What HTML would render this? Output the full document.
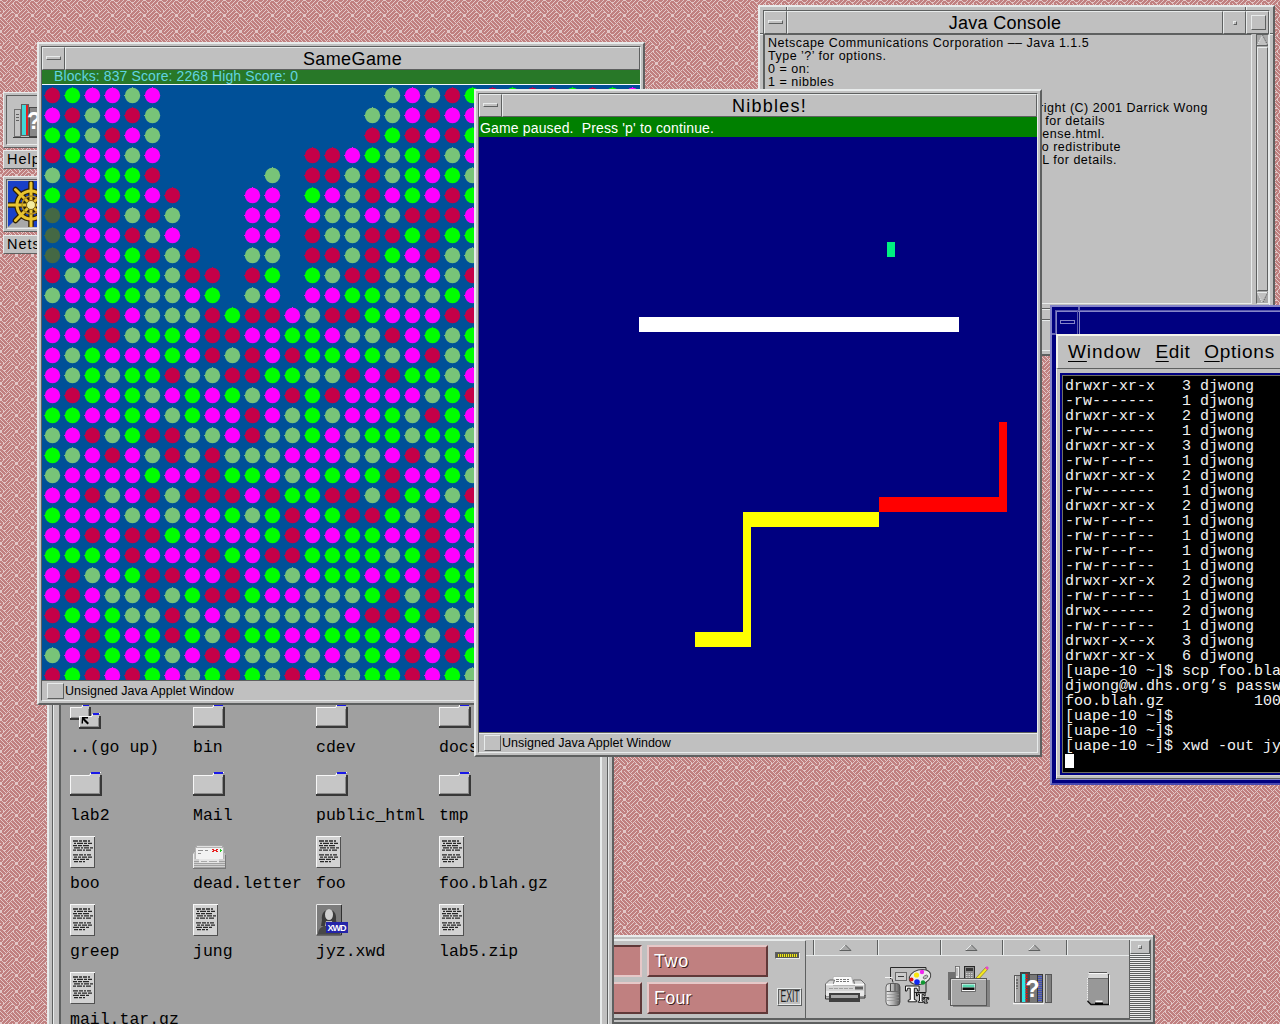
<!DOCTYPE html><html><head><meta charset="utf-8"><title>desktop</title><style>
*{margin:0;padding:0;box-sizing:border-box}
html,body{width:1280px;height:1024px;overflow:hidden}
body{position:relative;font-family:"Liberation Sans",sans-serif;background:#c08080;color:#000}
.a{position:absolute}
.win{position:absolute;background:#c0c0c0;border:2px solid;border-color:#e8ebeb #5e6060 #5e6060 #e8ebeb;padding:2px}
.win.f6{padding:3px}
.win>.in{position:relative;width:100%;height:100%;border:1px solid;border-color:#5e6060 #e8ebeb #e8ebeb #5e6060;background:#c0c0c0}
.win.act{background:#000080;border-color:#8585c8 #4848b0 #4848b0 #8585c8}
.win.act>.in{border-color:#000080 #8585c8 #8585c8 #000080;background:#000080}
.nt{position:absolute;background:#5e6060}.nt i{position:absolute;background:#e8ebeb}
.tb{position:absolute;left:0;top:0;right:0;height:23px;background:#c0c0c0}
.tb .mb{position:absolute;left:0;top:0;width:23px;height:23px;border:1px solid;border-color:#e8ebeb #5e6060 #5e6060 #e8ebeb}
.tb .mb i{position:absolute;left:3px;top:8px;width:15px;height:4px;border:1px solid;border-color:#e8ebeb #5e6060 #5e6060 #e8ebeb}
.tb .tt{position:absolute;left:23px;top:0;right:0;height:23px;border:1px solid;border-color:#e8ebeb #5e6060 #5e6060 #e8ebeb;text-align:center;font-size:18px;line-height:22px;white-space:nowrap;overflow:hidden;letter-spacing:.4px}
.bv{border:1px solid;border-color:#e8ebeb #5e6060 #5e6060 #e8ebeb}
.bvi{border:1px solid;border-color:#5e6060 #e8ebeb #e8ebeb #5e6060}
.sb{position:absolute;left:0;right:0;bottom:0;height:20px;background:#c0c0c0;border-top:1px solid #5e6060;font-size:12.5px;line-height:20px;white-space:nowrap}
.sb b{position:absolute;left:5px;top:2px;width:17px;height:16px;border:1px solid;border-color:#e8ebeb #5e6060 #5e6060 #e8ebeb}
.sb span{position:absolute;left:23px;top:0;letter-spacing:0}
.lbl{position:absolute;font-family:"Liberation Mono",monospace;font-size:16.5px;line-height:20px;white-space:pre}
.term{position:absolute;font-family:"Liberation Mono",monospace;font-size:15px;line-height:15px;white-space:pre;color:#f2f2f2}
.jc{position:absolute;font-size:12.5px;line-height:13px;white-space:pre;letter-spacing:.5px}
</style></head><body><svg class="a" style="left:0;top:0" width="1280" height="1024" shape-rendering="crispEdges"><defs><pattern id="bgp" width="16" height="16" patternUnits="userSpaceOnUse"><rect width="16" height="16" fill="#c08080"/><path d="M0 0h1v1h-1zM1 0h1v1h-1zM7 0h1v1h-1zM11 0h1v1h-1zM15 0h1v1h-1zM2 1h1v1h-1zM6 1h1v1h-1zM10 1h1v1h-1zM14 1h1v1h-1zM3 2h1v1h-1zM4 2h1v1h-1zM5 2h1v1h-1zM9 2h1v1h-1zM13 2h1v1h-1zM0 3h1v1h-1zM4 3h1v1h-1zM8 3h1v1h-1zM12 3h1v1h-1zM13 3h1v1h-1zM1 4h1v1h-1zM5 4h1v1h-1zM7 4h1v1h-1zM11 4h1v1h-1zM13 4h1v1h-1zM2 5h1v1h-1zM6 5h1v1h-1zM10 5h1v1h-1zM14 5h1v1h-1zM3 6h1v1h-1zM7 6h1v1h-1zM9 6h1v1h-1zM11 6h1v1h-1zM15 6h1v1h-1zM0 7h1v1h-1zM4 7h1v1h-1zM8 7h1v1h-1zM12 7h1v1h-1zM1 8h1v1h-1zM5 8h1v1h-1zM7 8h1v1h-1zM9 8h1v1h-1zM13 8h1v1h-1zM2 9h1v1h-1zM6 9h1v1h-1zM10 9h1v1h-1zM14 9h1v1h-1zM3 10h1v1h-1zM5 10h1v1h-1zM9 10h1v1h-1zM11 10h1v1h-1zM15 10h1v1h-1zM0 11h1v1h-1zM3 11h1v1h-1zM4 11h1v1h-1zM8 11h1v1h-1zM12 11h1v1h-1zM3 12h1v1h-1zM7 12h1v1h-1zM11 12h1v1h-1zM12 12h1v1h-1zM13 12h1v1h-1zM2 13h1v1h-1zM6 13h1v1h-1zM10 13h1v1h-1zM14 13h1v1h-1zM0 14h1v1h-1zM1 14h1v1h-1zM5 14h1v1h-1zM9 14h1v1h-1zM15 14h1v1h-1zM0 15h1v1h-1zM1 15h1v1h-1zM4 15h1v1h-1zM8 15h1v1h-1zM12 15h1v1h-1zM15 15h1v1h-1z" fill="#e3c7c7"/></pattern></defs><rect width="1280" height="1024" fill="url(#bgp)"/></svg><div class="a bv" style="left:3px;top:92px;width:60px;height:56px;background:#c0c0c0"><div class="a bvi" style="left:2px;top:2px;width:54px;height:50px"></div><svg class="a" style="left:9px;top:9px" width="40" height="38" shape-rendering="crispEdges"><rect x="1" y="7" width="6" height="27" fill="#c4c4c4" stroke="#707070"/><path d="M3 12h3M3 15h3M3 18h3" stroke="#606060"/><rect x="8" y="2" width="8" height="32" fill="#606060"/><rect x="9" y="3" width="4" height="30" fill="#40d8d8"/><rect x="13" y="3" width="2" height="30" fill="#e02020"/><rect x="16" y="5" width="11" height="29" fill="#888888" stroke="#484848"/><path d="M0 35h28" stroke="#404040"/><text x="14" y="27" font-family="Liberation Sans" font-weight="bold" font-size="23" fill="#fff">?</text></svg></div><div class="a bv" style="left:3px;top:150px;width:60px;height:19px;background:#c0c0c0;font-size:14.5px;line-height:16px;padding-left:3px;letter-spacing:1px;white-space:nowrap;overflow:hidden">Help</div><div class="a bv" style="left:3px;top:176px;width:60px;height:56px;background:#c0c0c0"><div class="a bvi" style="left:2px;top:2px;width:54px;height:50px"></div><svg class="a" style="left:4px;top:4px" width="50" height="46"><rect width="50" height="46" fill="#1840c8"/><path d="M0 46l8-8h14l4 8z" fill="#a8a8a8"/><g stroke="#302000" stroke-width="5.5" fill="none" stroke-linecap="round"><circle cx="23" cy="24" r="14"/><path d="M23 2v44M1 24h44M7.5 8.5l31 31M38.5 8.5l-31 31"/></g><g stroke="#e8c430" stroke-width="3" fill="none" stroke-linecap="round"><circle cx="23" cy="24" r="14"/><path d="M23 2v44M1 24h44M7.5 8.5l31 31M38.5 8.5l-31 31"/></g><circle cx="23" cy="24" r="9" fill="none" stroke="#b89020" stroke-width="1.5"/><circle cx="23" cy="24" r="4.5" fill="#f4eca0" stroke="#806010"/></svg></div><div class="a bv" style="left:3px;top:235px;width:60px;height:19px;background:#c0c0c0;font-size:14.5px;line-height:16px;padding-left:3px;letter-spacing:1px;white-space:nowrap;overflow:hidden">Nets</div><div class="win  f6" style="left:47px;top:600px;width:567px;height:470px"><div class="in"><div class="a bv" style="left:0;top:0;width:555px;height:460px;background:#c0c0c0"></div><div class="a" style="left:6px;top:0;width:543px;height:460px;background:#a0a0a0;border-left:2px solid #5e6060;border-right:2px solid #e8ebeb"></div><svg class="a" style="left:17px;top:98px" width="34" height="27" shape-rendering="crispEdges"><path d="M0 3h11l2-3h6v3h1v12h-20z" fill="#c6c6c6"/><path d="M0.5 15v-11.5h11l2-3h6" stroke="#f6f6f6" fill="none"/><rect x="13" y="0" width="6" height="2" fill="#1818e8"/><path d="M20 3v12h-20" stroke="#383838" fill="none" stroke-width="2"/><path d="M18 5v8h-17" stroke="#8c8c8c" fill="none"/><path d="M9 12h12l2-3h6v3h1v12h-21z" fill="#c6c6c6"/><path d="M9.5 24v-11.5h12l2-3h6" stroke="#f6f6f6" fill="none"/><rect x="23" y="9" width="6" height="2" fill="#1818e8"/><path d="M30 12v12h-21" stroke="#383838" fill="none" stroke-width="2"/><path d="M28 14v8h-18" stroke="#8c8c8c" fill="none"/><path d="M12 13h6v1.5h-3.5l4.5 4.5-1.5 1.5-4.5-4.5v3.5h-1.5z" fill="#000" shape-rendering="auto"/></svg><div class="lbl" style="left:17px;top:132px">..(go up)</div><svg class="a" style="left:140px;top:98px" width="34" height="27" shape-rendering="crispEdges"><path d="M0 3h19l2-3h9v3h1v20h-31z" fill="#c6c6c6"/><path d="M0.5 23v-19.5h19l2-3h9" stroke="#f6f6f6" fill="none"/><rect x="21" y="0" width="9" height="2" fill="#1818e8"/><path d="M31 3v20h-31" stroke="#383838" fill="none" stroke-width="2"/><path d="M29 5v16h-28" stroke="#8c8c8c" fill="none"/></svg><div class="lbl" style="left:140px;top:132px">bin</div><svg class="a" style="left:263px;top:98px" width="34" height="27" shape-rendering="crispEdges"><path d="M0 3h19l2-3h9v3h1v20h-31z" fill="#c6c6c6"/><path d="M0.5 23v-19.5h19l2-3h9" stroke="#f6f6f6" fill="none"/><rect x="21" y="0" width="9" height="2" fill="#1818e8"/><path d="M31 3v20h-31" stroke="#383838" fill="none" stroke-width="2"/><path d="M29 5v16h-28" stroke="#8c8c8c" fill="none"/></svg><div class="lbl" style="left:263px;top:132px">cdev</div><svg class="a" style="left:386px;top:98px" width="34" height="27" shape-rendering="crispEdges"><path d="M0 3h19l2-3h9v3h1v20h-31z" fill="#c6c6c6"/><path d="M0.5 23v-19.5h19l2-3h9" stroke="#f6f6f6" fill="none"/><rect x="21" y="0" width="9" height="2" fill="#1818e8"/><path d="M31 3v20h-31" stroke="#383838" fill="none" stroke-width="2"/><path d="M29 5v16h-28" stroke="#8c8c8c" fill="none"/></svg><div class="lbl" style="left:386px;top:132px">docs</div><svg class="a" style="left:17px;top:166px" width="34" height="27" shape-rendering="crispEdges"><path d="M0 3h19l2-3h9v3h1v20h-31z" fill="#c6c6c6"/><path d="M0.5 23v-19.5h19l2-3h9" stroke="#f6f6f6" fill="none"/><rect x="21" y="0" width="9" height="2" fill="#1818e8"/><path d="M31 3v20h-31" stroke="#383838" fill="none" stroke-width="2"/><path d="M29 5v16h-28" stroke="#8c8c8c" fill="none"/></svg><div class="lbl" style="left:17px;top:200px">lab2</div><svg class="a" style="left:140px;top:166px" width="34" height="27" shape-rendering="crispEdges"><path d="M0 3h19l2-3h9v3h1v20h-31z" fill="#c6c6c6"/><path d="M0.5 23v-19.5h19l2-3h9" stroke="#f6f6f6" fill="none"/><rect x="21" y="0" width="9" height="2" fill="#1818e8"/><path d="M31 3v20h-31" stroke="#383838" fill="none" stroke-width="2"/><path d="M29 5v16h-28" stroke="#8c8c8c" fill="none"/></svg><div class="lbl" style="left:140px;top:200px">Mail</div><svg class="a" style="left:263px;top:166px" width="34" height="27" shape-rendering="crispEdges"><path d="M0 3h19l2-3h9v3h1v20h-31z" fill="#c6c6c6"/><path d="M0.5 23v-19.5h19l2-3h9" stroke="#f6f6f6" fill="none"/><rect x="21" y="0" width="9" height="2" fill="#1818e8"/><path d="M31 3v20h-31" stroke="#383838" fill="none" stroke-width="2"/><path d="M29 5v16h-28" stroke="#8c8c8c" fill="none"/></svg><div class="lbl" style="left:263px;top:200px">public_html</div><svg class="a" style="left:386px;top:166px" width="34" height="27" shape-rendering="crispEdges"><path d="M0 3h19l2-3h9v3h1v20h-31z" fill="#c6c6c6"/><path d="M0.5 23v-19.5h19l2-3h9" stroke="#f6f6f6" fill="none"/><rect x="21" y="0" width="9" height="2" fill="#1818e8"/><path d="M31 3v20h-31" stroke="#383838" fill="none" stroke-width="2"/><path d="M29 5v16h-28" stroke="#8c8c8c" fill="none"/></svg><div class="lbl" style="left:386px;top:200px">tmp</div><svg class="a" style="left:17px;top:230px" width="26" height="32" shape-rendering="crispEdges"><rect x="0" y="0" width="25" height="31" fill="#d2d2d2"/><path d="M0.5 31v-30.5h24" stroke="#f8f8f8" fill="none"/><path d="M24.5 1v30h-24" stroke="#505050" fill="none"/><path d="M3 5.0h19" stroke="#282828" stroke-dasharray="5 1 3 1 4 1 2" stroke-width="1.3" shape-rendering="auto"/><path d="M4 7.3h18" stroke="#282828" stroke-dasharray="2 1 6 1 3 1 4" stroke-width="1.3" shape-rendering="auto"/><path d="M3 9.6h17" stroke="#282828" stroke-dasharray="4 1 4 1 6 1 2" stroke-width="1.3" shape-rendering="auto"/><path d="M4 11.9h19" stroke="#282828" stroke-dasharray="6 1 2 1 5 1 3" stroke-width="1.3" shape-rendering="auto"/><path d="M3 14.2h18" stroke="#282828" stroke-dasharray="3 1 5 1 2 1 5" stroke-width="1.3" shape-rendering="auto"/><path d="M3 18.8h19" stroke="#282828" stroke-dasharray="5 1 4 1 2 1 4" stroke-width="1.3" shape-rendering="auto"/><path d="M4 21.1h18" stroke="#282828" stroke-dasharray="3 1 3 1 5 1 4" stroke-width="1.3" shape-rendering="auto"/><path d="M3 23.4h17" stroke="#282828" stroke-dasharray="6 1 5 1 3 1 2" stroke-width="1.3" shape-rendering="auto"/><path d="M4 25.7h19" stroke="#282828" stroke-dasharray="4 1 3 1 2 8 0" stroke-width="1.3" shape-rendering="auto"/></svg><div class="lbl" style="left:17px;top:268px">boo</div><svg class="a" style="left:140px;top:238px" width="33" height="26" shape-rendering="crispEdges"><path d="M0 10l2-3h28l2 3v14h-32z" fill="#c4c4c4"/><rect x="3" y="1" width="26" height="12" fill="#e0e0e0" stroke="#a8a8a8"/><rect x="2" y="3" width="28" height="12" fill="#f2f2f2" stroke="#b4b4b4"/><path d="M5 6.5h5M12 6.5h3M5 9.5h3" stroke="#909090"/><path d="M19 5.5h2M20 6.5h2M19 7.5h2M23 5.5h2M22 6.5h2M23 7.5h2" stroke="#e82020"/><path d="M27 5.5h1M27 6.5h2M27 7.5h1" stroke="#20c820"/><rect x="0" y="15" width="32" height="9" fill="#d0d0d0"/><path d="M0 17.5h32M0 19.5h32M0 21.5h32M0 23.5h32" stroke="#a0a0a0"/><path d="M6 15h20v4h-20z" fill="#e6e6e6"/><path d="M8 17.5h6M16 17.5h8" stroke="#a8a8a8"/><path d="M0.5 10v14" stroke="#f0f0f0"/><path d="M0 24.5h32.5v-14" stroke="#787878" fill="none"/></svg><div class="lbl" style="left:140px;top:268px">dead.letter</div><svg class="a" style="left:263px;top:230px" width="26" height="32" shape-rendering="crispEdges"><rect x="0" y="0" width="25" height="31" fill="#d2d2d2"/><path d="M0.5 31v-30.5h24" stroke="#f8f8f8" fill="none"/><path d="M24.5 1v30h-24" stroke="#505050" fill="none"/><path d="M3 5.0h19" stroke="#282828" stroke-dasharray="5 1 3 1 4 1 2" stroke-width="1.3" shape-rendering="auto"/><path d="M4 7.3h18" stroke="#282828" stroke-dasharray="2 1 6 1 3 1 4" stroke-width="1.3" shape-rendering="auto"/><path d="M3 9.6h17" stroke="#282828" stroke-dasharray="4 1 4 1 6 1 2" stroke-width="1.3" shape-rendering="auto"/><path d="M4 11.9h19" stroke="#282828" stroke-dasharray="6 1 2 1 5 1 3" stroke-width="1.3" shape-rendering="auto"/><path d="M3 14.2h18" stroke="#282828" stroke-dasharray="3 1 5 1 2 1 5" stroke-width="1.3" shape-rendering="auto"/><path d="M3 18.8h19" stroke="#282828" stroke-dasharray="5 1 4 1 2 1 4" stroke-width="1.3" shape-rendering="auto"/><path d="M4 21.1h18" stroke="#282828" stroke-dasharray="3 1 3 1 5 1 4" stroke-width="1.3" shape-rendering="auto"/><path d="M3 23.4h17" stroke="#282828" stroke-dasharray="6 1 5 1 3 1 2" stroke-width="1.3" shape-rendering="auto"/><path d="M4 25.7h19" stroke="#282828" stroke-dasharray="4 1 3 1 2 8 0" stroke-width="1.3" shape-rendering="auto"/></svg><div class="lbl" style="left:263px;top:268px">foo</div><svg class="a" style="left:386px;top:230px" width="26" height="32" shape-rendering="crispEdges"><rect x="0" y="0" width="25" height="31" fill="#d2d2d2"/><path d="M0.5 31v-30.5h24" stroke="#f8f8f8" fill="none"/><path d="M24.5 1v30h-24" stroke="#505050" fill="none"/><path d="M3 5.0h19" stroke="#282828" stroke-dasharray="5 1 3 1 4 1 2" stroke-width="1.3" shape-rendering="auto"/><path d="M4 7.3h18" stroke="#282828" stroke-dasharray="2 1 6 1 3 1 4" stroke-width="1.3" shape-rendering="auto"/><path d="M3 9.6h17" stroke="#282828" stroke-dasharray="4 1 4 1 6 1 2" stroke-width="1.3" shape-rendering="auto"/><path d="M4 11.9h19" stroke="#282828" stroke-dasharray="6 1 2 1 5 1 3" stroke-width="1.3" shape-rendering="auto"/><path d="M3 14.2h18" stroke="#282828" stroke-dasharray="3 1 5 1 2 1 5" stroke-width="1.3" shape-rendering="auto"/><path d="M3 18.8h19" stroke="#282828" stroke-dasharray="5 1 4 1 2 1 4" stroke-width="1.3" shape-rendering="auto"/><path d="M4 21.1h18" stroke="#282828" stroke-dasharray="3 1 3 1 5 1 4" stroke-width="1.3" shape-rendering="auto"/><path d="M3 23.4h17" stroke="#282828" stroke-dasharray="6 1 5 1 3 1 2" stroke-width="1.3" shape-rendering="auto"/><path d="M4 25.7h19" stroke="#282828" stroke-dasharray="4 1 3 1 2 8 0" stroke-width="1.3" shape-rendering="auto"/></svg><div class="lbl" style="left:386px;top:268px">foo.blah.gz</div><svg class="a" style="left:17px;top:298px" width="26" height="32" shape-rendering="crispEdges"><rect x="0" y="0" width="25" height="31" fill="#d2d2d2"/><path d="M0.5 31v-30.5h24" stroke="#f8f8f8" fill="none"/><path d="M24.5 1v30h-24" stroke="#505050" fill="none"/><path d="M3 5.0h19" stroke="#282828" stroke-dasharray="5 1 3 1 4 1 2" stroke-width="1.3" shape-rendering="auto"/><path d="M4 7.3h18" stroke="#282828" stroke-dasharray="2 1 6 1 3 1 4" stroke-width="1.3" shape-rendering="auto"/><path d="M3 9.6h17" stroke="#282828" stroke-dasharray="4 1 4 1 6 1 2" stroke-width="1.3" shape-rendering="auto"/><path d="M4 11.9h19" stroke="#282828" stroke-dasharray="6 1 2 1 5 1 3" stroke-width="1.3" shape-rendering="auto"/><path d="M3 14.2h18" stroke="#282828" stroke-dasharray="3 1 5 1 2 1 5" stroke-width="1.3" shape-rendering="auto"/><path d="M3 18.8h19" stroke="#282828" stroke-dasharray="5 1 4 1 2 1 4" stroke-width="1.3" shape-rendering="auto"/><path d="M4 21.1h18" stroke="#282828" stroke-dasharray="3 1 3 1 5 1 4" stroke-width="1.3" shape-rendering="auto"/><path d="M3 23.4h17" stroke="#282828" stroke-dasharray="6 1 5 1 3 1 2" stroke-width="1.3" shape-rendering="auto"/><path d="M4 25.7h19" stroke="#282828" stroke-dasharray="4 1 3 1 2 8 0" stroke-width="1.3" shape-rendering="auto"/></svg><div class="lbl" style="left:17px;top:336px">greep</div><svg class="a" style="left:140px;top:298px" width="26" height="32" shape-rendering="crispEdges"><rect x="0" y="0" width="25" height="31" fill="#d2d2d2"/><path d="M0.5 31v-30.5h24" stroke="#f8f8f8" fill="none"/><path d="M24.5 1v30h-24" stroke="#505050" fill="none"/><path d="M3 5.0h19" stroke="#282828" stroke-dasharray="5 1 3 1 4 1 2" stroke-width="1.3" shape-rendering="auto"/><path d="M4 7.3h18" stroke="#282828" stroke-dasharray="2 1 6 1 3 1 4" stroke-width="1.3" shape-rendering="auto"/><path d="M3 9.6h17" stroke="#282828" stroke-dasharray="4 1 4 1 6 1 2" stroke-width="1.3" shape-rendering="auto"/><path d="M4 11.9h19" stroke="#282828" stroke-dasharray="6 1 2 1 5 1 3" stroke-width="1.3" shape-rendering="auto"/><path d="M3 14.2h18" stroke="#282828" stroke-dasharray="3 1 5 1 2 1 5" stroke-width="1.3" shape-rendering="auto"/><path d="M3 18.8h19" stroke="#282828" stroke-dasharray="5 1 4 1 2 1 4" stroke-width="1.3" shape-rendering="auto"/><path d="M4 21.1h18" stroke="#282828" stroke-dasharray="3 1 3 1 5 1 4" stroke-width="1.3" shape-rendering="auto"/><path d="M3 23.4h17" stroke="#282828" stroke-dasharray="6 1 5 1 3 1 2" stroke-width="1.3" shape-rendering="auto"/><path d="M4 25.7h19" stroke="#282828" stroke-dasharray="4 1 3 1 2 8 0" stroke-width="1.3" shape-rendering="auto"/></svg><div class="lbl" style="left:140px;top:336px">jung</div><svg class="a" style="left:263px;top:298px" width="34" height="32"><rect x="0" y="0" width="26" height="31" fill="#7c7c7c"/><path d="M0.5 31v-30.5h25" stroke="#e8e8e8" fill="none"/><path d="M25.5 1v30h-25" stroke="#303030" fill="none"/><path d="M6 16c-2-14 16-14 14 0l1 6h-16z" fill="#3c3c3c"/><ellipse cx="13" cy="10.5" rx="4" ry="5.5" fill="#d0d0d0"/><path d="M2 30c0-12 22-12 22 0z" fill="#484848"/><path d="M10 17h6l1 5h-8z" fill="#b8b8b8"/><rect x="10" y="18" width="22" height="11" fill="#2424a8"/><text x="11.5" y="27" font-family="Liberation Sans" font-size="9" font-weight="bold" fill="#fff" textLength="19">XWD</text></svg><div class="lbl" style="left:263px;top:336px">jyz.xwd</div><svg class="a" style="left:386px;top:298px" width="26" height="32" shape-rendering="crispEdges"><rect x="0" y="0" width="25" height="31" fill="#d2d2d2"/><path d="M0.5 31v-30.5h24" stroke="#f8f8f8" fill="none"/><path d="M24.5 1v30h-24" stroke="#505050" fill="none"/><path d="M3 5.0h19" stroke="#282828" stroke-dasharray="5 1 3 1 4 1 2" stroke-width="1.3" shape-rendering="auto"/><path d="M4 7.3h18" stroke="#282828" stroke-dasharray="2 1 6 1 3 1 4" stroke-width="1.3" shape-rendering="auto"/><path d="M3 9.6h17" stroke="#282828" stroke-dasharray="4 1 4 1 6 1 2" stroke-width="1.3" shape-rendering="auto"/><path d="M4 11.9h19" stroke="#282828" stroke-dasharray="6 1 2 1 5 1 3" stroke-width="1.3" shape-rendering="auto"/><path d="M3 14.2h18" stroke="#282828" stroke-dasharray="3 1 5 1 2 1 5" stroke-width="1.3" shape-rendering="auto"/><path d="M3 18.8h19" stroke="#282828" stroke-dasharray="5 1 4 1 2 1 4" stroke-width="1.3" shape-rendering="auto"/><path d="M4 21.1h18" stroke="#282828" stroke-dasharray="3 1 3 1 5 1 4" stroke-width="1.3" shape-rendering="auto"/><path d="M3 23.4h17" stroke="#282828" stroke-dasharray="6 1 5 1 3 1 2" stroke-width="1.3" shape-rendering="auto"/><path d="M4 25.7h19" stroke="#282828" stroke-dasharray="4 1 3 1 2 8 0" stroke-width="1.3" shape-rendering="auto"/></svg><div class="lbl" style="left:386px;top:336px">lab5.zip</div><svg class="a" style="left:17px;top:366px" width="26" height="32" shape-rendering="crispEdges"><rect x="0" y="0" width="25" height="31" fill="#d2d2d2"/><path d="M0.5 31v-30.5h24" stroke="#f8f8f8" fill="none"/><path d="M24.5 1v30h-24" stroke="#505050" fill="none"/><path d="M3 5.0h19" stroke="#282828" stroke-dasharray="5 1 3 1 4 1 2" stroke-width="1.3" shape-rendering="auto"/><path d="M4 7.3h18" stroke="#282828" stroke-dasharray="2 1 6 1 3 1 4" stroke-width="1.3" shape-rendering="auto"/><path d="M3 9.6h17" stroke="#282828" stroke-dasharray="4 1 4 1 6 1 2" stroke-width="1.3" shape-rendering="auto"/><path d="M4 11.9h19" stroke="#282828" stroke-dasharray="6 1 2 1 5 1 3" stroke-width="1.3" shape-rendering="auto"/><path d="M3 14.2h18" stroke="#282828" stroke-dasharray="3 1 5 1 2 1 5" stroke-width="1.3" shape-rendering="auto"/><path d="M3 18.8h19" stroke="#282828" stroke-dasharray="5 1 4 1 2 1 4" stroke-width="1.3" shape-rendering="auto"/><path d="M4 21.1h18" stroke="#282828" stroke-dasharray="3 1 3 1 5 1 4" stroke-width="1.3" shape-rendering="auto"/><path d="M3 23.4h17" stroke="#282828" stroke-dasharray="6 1 5 1 3 1 2" stroke-width="1.3" shape-rendering="auto"/><path d="M4 25.7h19" stroke="#282828" stroke-dasharray="4 1 3 1 2 8 0" stroke-width="1.3" shape-rendering="auto"/></svg><div class="lbl" style="left:17px;top:404px">mail.tar.gz</div></div></div><div class="a" style="left:614px;top:935px;width:541px;height:89px;overflow:hidden"><div class="a" style="left:0;top:0;width:541px;height:89px;background:#c0c0c0"></div><div class="a" style="left:0;top:0;width:541px;height:2px;background:#e8ebeb"></div><div class="a" style="left:0;top:4px;width:537px;height:1px;background:#e8ebeb"></div><div class="a" style="left:0;top:5px;width:191px;height:1px;background:#e8ebeb"></div><div class="a" style="left:0;top:83px;width:516px;height:2px;background:#5e6060"></div><div class="a" style="left:0;top:87px;width:541px;height:2px;background:#5e6060"></div><div class="a" style="left:539px;top:0;width:2px;height:89px;background:#5e6060"></div><div class="a" style="left:-92px;top:10px;width:120px;height:32px;background:#c08080;border:2px solid;border-color:#603838 #e6c8c8 #e6c8c8 #603838"></div><div class="a" style="left:-92px;top:47px;width:120px;height:32px;background:#c08080;border:2px solid;border-color:#e6c8c8 #603838 #603838 #e6c8c8"></div><div class="a" style="left:33px;top:10px;width:121px;height:32px;background:#c08080;border:2px solid;border-color:#e6c8c8 #603838 #603838 #e6c8c8"><span style="position:absolute;left:5px;top:3px;color:#fff;font-size:18px;line-height:22px;text-shadow:1px 1px 0 #402020;letter-spacing:0.6px">Two</span></div><div class="a" style="left:33px;top:47px;width:121px;height:32px;background:#c08080;border:2px solid;border-color:#e6c8c8 #603838 #603838 #e6c8c8"><span style="position:absolute;left:5px;top:3px;color:#fff;font-size:18px;line-height:22px;text-shadow:1px 1px 0 #402020;letter-spacing:0.2px">Four</span></div><div class="a bvi" style="left:161px;top:17px;width:25px;height:7px;background:#585858"><div class="a" style="left:2px;top:1px;width:19px;height:3px;background:repeating-linear-gradient(90deg,#f0e820 0 1px,#686820 1px 2px)"></div></div><div class="a bv" style="left:163px;top:53px;width:25px;height:18px"><div class="bvi" style="height:16px;overflow:hidden"><div style="width:40px;margin-left:-9px;color:#202020;font-size:16px;line-height:14px;text-align:center;transform:scaleX(.54)">EXIT</div></div></div><div class="a" style="left:191px;top:6px;width:1px;height:77px;background:#5e6060"></div><div class="a" style="left:199px;top:5px;width:1px;height:15px;background:#5e6060"></div><div class="a" style="left:200px;top:5px;width:1px;height:15px;background:#e8ebeb"></div><div class="a" style="left:263px;top:5px;width:1px;height:15px;background:#5e6060"></div><div class="a" style="left:264px;top:5px;width:1px;height:15px;background:#e8ebeb"></div><div class="a" style="left:326px;top:5px;width:1px;height:15px;background:#5e6060"></div><div class="a" style="left:327px;top:5px;width:1px;height:15px;background:#e8ebeb"></div><div class="a" style="left:388px;top:5px;width:1px;height:15px;background:#5e6060"></div><div class="a" style="left:389px;top:5px;width:1px;height:15px;background:#e8ebeb"></div><div class="a" style="left:452px;top:5px;width:1px;height:15px;background:#5e6060"></div><div class="a" style="left:453px;top:5px;width:1px;height:15px;background:#e8ebeb"></div><div class="a" style="left:192px;top:20px;width:323px;height:1px;background:#e8ebeb"></div><svg class="a" style="left:225px;top:9px" width="13" height="8"><path d="M6.5 1L12 6.5H0.5z" fill="#a8a8a8"/><path d="M0.5 6.5L6 1" stroke="#e8ebeb"/><path d="M6.5 1L12 6.5H0.5" stroke="#5e6060" fill="none"/></svg><svg class="a" style="left:351px;top:9px" width="13" height="8"><path d="M6.5 1L12 6.5H0.5z" fill="#a8a8a8"/><path d="M0.5 6.5L6 1" stroke="#e8ebeb"/><path d="M6.5 1L12 6.5H0.5" stroke="#5e6060" fill="none"/></svg><svg class="a" style="left:414px;top:9px" width="13" height="8"><path d="M6.5 1L12 6.5H0.5z" fill="#a8a8a8"/><path d="M0.5 6.5L6 1" stroke="#e8ebeb"/><path d="M6.5 1L12 6.5H0.5" stroke="#5e6060" fill="none"/></svg><div class="a" style="left:515px;top:5px;width:1px;height:80px;background:#5e6060"></div><div class="a" style="left:516px;top:4px;width:21px;height:15px;border:solid;border-width:2px 2px 1px 1px;border-color:#e8ebeb #5e6060 #5e6060 #e8ebeb"><div class="a bv" style="left:7px;top:4px;width:4px;height:4px"></div></div><div class="a" style="left:516px;top:19px;width:20px;height:66px;background:repeating-linear-gradient(180deg,#f0f0f0 0 1px,#5e6060 1px 2px)"></div><div class="a" style="left:536px;top:19px;width:1px;height:66px;background:#5e6060"></div><svg class="a" style="left:210px;top:40px" width="44" height="30"><path d="M9.5 1.5h18l2 8h-22z" fill="#fafafa" stroke="#a8a8a8" stroke-width=".7"/><path d="M12 4.5h14M12 6.5h13" stroke="#686868" stroke-width=".9" stroke-dasharray="3 1 2 1"/><path d="M1.5 9l4-4h5l-1.5 5h22l-1.5-5h7.5l4 4v12h-39.5z" fill="#d4d4d4" stroke="#606060" stroke-width=".9"/><path d="M2 9.5h38" stroke="#fcfcfc" stroke-width="1.5"/><path d="M5 13.5h25" stroke="#a0a0a0" stroke-dasharray="4 1"/><rect x="31" y="11.5" width="8" height="3" fill="#606060"/><path d="M2 16h38v5h-38z" fill="#e8e8e8"/><rect x="5" y="18" width="31" height="9" fill="#404040"/><rect x="7" y="20" width="27" height="3" fill="#a8a8a8"/><path d="M1.5 20v4h4M41 20v3h-5" stroke="#303030" fill="none"/></svg><svg class="a" style="left:270px;top:31px" width="48" height="42"><path d="M6.5 13v-11.5h35.5v25h-14" fill="none" stroke="#282828"/><rect x="11.5" y="6.5" width="11" height="8" fill="#cccccc" stroke="#686868"/><path d="M14 10.5h6" stroke="#383838"/><path d="M1 11.5h7l1 3" stroke="#f4f4f4" fill="none"/><path d="M8 12.5l1 4" stroke="#383838" fill="none"/><ellipse cx="36" cy="11" rx="11" ry="7.2" fill="#ececec" stroke="#404040" transform="rotate(-15 36 11)"/><ellipse cx="41.5" cy="11" rx="2.5" ry="1.5" fill="#c0c0c0" stroke="#404040" stroke-width=".6" transform="rotate(-30 41.5 11)"/><circle cx="27.5" cy="13.5" r="2" fill="#e81010"/><circle cx="32.5" cy="9" r="2.6" fill="#f8e810"/><circle cx="33" cy="16" r="2.8" fill="#1028f0"/><circle cx="39" cy="16.5" r="2.2" fill="#109830"/><circle cx="38" cy="6" r="2.2" fill="#f028f0"/><defs><linearGradient id="mg" x1="0" y1="0" x2="1" y2="0"><stop offset="0" stop-color="#f0f0f0"/><stop offset=".5" stop-color="#b0b0b0"/><stop offset="1" stop-color="#585858"/></linearGradient></defs><rect x="2" y="17.5" width="14" height="22" rx="3.5" fill="url(#mg)" stroke="#484848" stroke-width=".8"/><path d="M6.5 18v7M11 18v7" stroke="#484848"/><path d="M2.5 25.5h13" stroke="#686868"/><path d="M3 28.5h12M3 31.5h12M3 34.5h12" stroke="#909090" stroke-width=".7"/><path transform="translate(21.5 20) scale(1.36 1.58)" d="M0 0h10v3.2h-1l-.6-1.8h-1.9v7.2l1.5.4v1h-6v-1l1.5-.4v-7.2h-1.9l-.6 1.8h-1z" fill="#fff" stroke="#000" stroke-width="0.61" stroke-linejoin="round"/><path transform="translate(32.5 27) scale(0.86 0.93)" d="M0 0h10v3.2h-1l-.6-1.8h-1.9v7.2l1.5.4v1h-6v-1l1.5-.4v-7.2h-1.9l-.6 1.8h-1z" fill="#fff" stroke="#000" stroke-width="1.01" stroke-linejoin="round"/><path transform="translate(39 31.6) scale(0.57 0.55)" d="M0 0h10v3.2h-1l-.6-1.8h-1.9v7.2l1.5.4v1h-6v-1l1.5-.4v-7.2h-1.9l-.6 1.8h-1z" fill="#fff" stroke="#000" stroke-width="1.61" stroke-linejoin="round"/></svg><svg class="a" style="left:333px;top:30px" width="46" height="44"><rect x="8.5" y="1.5" width="4" height="14" fill="#ececec" stroke="#585858" stroke-width=".7"/><path d="M9 4h2M9 6h2M9 8h2M9 10h2" stroke="#585858" stroke-width=".6"/><rect x="17.5" y="1.5" width="10" height="14" fill="#8c8c8c" stroke="#282828"/><rect x="19" y="3" width="7" height="3" fill="#383838"/><path d="M19 8.5h7M19 10.5h7M19 12.5h7" stroke="#d0d0d0" stroke-dasharray="1.5 1"/><path d="M29 13l10-11 2 2-10 11z" fill="#f4e820" stroke="#605010" stroke-width=".5"/><path d="M38 3l2-2 2 2-2 2z" fill="#e848c8"/><rect x="1" y="7" width="7" height="28" fill="#707070"/><rect x="6" y="15" width="37" height="27" fill="#848484"/><rect x="3.5" y="13.5" width="36" height="27" fill="#a6a6a6" stroke="#585858"/><path d="M4.5 40v-25.5h34.5" stroke="#d8d8d8" fill="none"/><rect x="14.5" y="18.5" width="14" height="8" fill="#fafafa" stroke="#505050" stroke-width=".8"/><rect x="15.5" y="19.5" width="12" height="3" fill="#58d8b0"/><rect x="15.5" y="22.5" width="12" height="2.5" fill="#101010"/></svg><svg class="a" style="left:399px;top:36px" width="42" height="38"><rect x="1.5" y="4.5" width="6" height="27" fill="#a4a4a4" stroke="#585858"/><path d="M2.5 5v26" stroke="#e8e8e8"/><path d="M4 8v10" stroke="#707070" stroke-width="2" stroke-dasharray="2 1"/><rect x="7.5" y="1.5" width="9" height="30" fill="#484848" stroke="#404040"/><rect x="9" y="3" width="3.5" height="28" fill="#30e8e8"/><path d="M13.5 3v28" stroke="#f01010" stroke-width="2" stroke-dasharray="1.5 1"/><rect x="16.5" y="3.5" width="8" height="28" fill="#787878" stroke="#484848"/><rect x="24.5" y="3.5" width="5" height="28" fill="#707888" stroke="#383838"/><path d="M26 5v26M28 5v26" stroke="#1020f0" stroke-dasharray="1 1"/><rect x="32.5" y="3.5" width="6" height="28" fill="#808080" stroke="#585858"/><path d="M33.5 4v27" stroke="#b8b8b8"/><path d="M0 32.5h31" stroke="#f4f4f4" stroke-width="1.5"/><text x="12.5" y="26" font-family="Liberation Sans" font-weight="bold" font-size="23" fill="#fff">?</text></svg><svg class="a" style="left:472px;top:36px" width="26" height="36"><path d="M1.5 7l1.5-5h18l1.5 5v26h-18l-3-3z" fill="#989898"/><path d="M1.5 7l1.5-5h18l1.5 5z" fill="#d6d6d6"/><path d="M3 1.5h18" stroke="#585858"/><path d="M2.5 2.5h19" stroke="#f8f8f8"/><path d="M1.5 7v23" stroke="#f4f4f4" stroke-dasharray="1.5 .8"/><path d="M2 7.5h20" stroke="#606060" stroke-width=".8"/><path d="M22.5 3v30.5" stroke="#383838"/><path d="M23.5 4v30" stroke="#f4f4f4"/><path d="M1.5 30l3.5 3.5h18" stroke="#101010" stroke-width="1.4" fill="none"/><rect x="9.5" y="29.5" width="7" height="2" fill="#f8f8f8"/><rect x="9" y="31.5" width="8" height="2" fill="#000"/></svg></div><div class="win  f6" style="left:758px;top:5px;width:517px;height:351px"><div class="nt" style="left:26px;top:0;width:1px;height:3px"><i style="left:1px;top:0;width:1px;height:3px"></i></div><div class="nt" style="left:485px;top:0;width:1px;height:3px"><i style="left:1px;top:0;width:1px;height:3px"></i></div><div class="nt" style="left:0;top:26px;width:3px;height:1px"><i style="left:0;top:1px;width:3px;height:1px"></i></div><div class="nt" style="left:510px;top:26px;width:3px;height:1px"><i style="left:0;top:1px;width:3px;height:1px"></i></div><div class="in"><div class="tb"><div class="mb"><i></i></div><div class="tt" style="right:46px;letter-spacing:.3px">Java Console</div><div class="a bv" style="right:23px;top:0;width:23px;height:23px;background:#c0c0c0"><div class="a bv" style="left:9px;top:9px;width:4px;height:4px"></div></div><div class="a bv" style="right:0;top:0;width:23px;height:23px;background:#c0c0c0"><div class="a bv" style="left:4px;top:3px;width:15px;height:15px"></div></div></div><div class="a bvi" style="left:0;top:23px;width:488px;height:270px"></div><div class="jc" style="left:4px;top:26px">Netscape Communications Corporation –– Java 1.1.5
Type ’?’ for options.
0 = on:
1 = nibbles</div><div class="jc" style="right:61px;top:91px">Copyright (C) 2001 Darrick Wong</div><div class="jc" style="right:164px;top:104px">See license.html for details</div><div class="jc" style="right:164px;top:117px">See license.html.</div><div class="jc" style="right:148px;top:130px">Free to redistribute</div><div class="jc" style="right:152px;top:143px">See GPL for details.</div><div class="a bvi" style="left:492px;top:23px;width:13px;height:270px;background:#a8a8a8"><div class="a bv" style="left:0;top:12px;width:11px;height:244px;background:#c0c0c0"></div><svg class="a" style="left:0;top:0" width="11" height="12"><path d="M5.5 0L11 11H0z" fill="#c0c0c0"/><path d="M5.5 0L0 11" stroke="#e8ebeb" stroke-dasharray="1.5 1"/><path d="M5.5 0L11 11" stroke="#5e6060" stroke-dasharray="1.5 1" fill="none"/><path d="M0 10.5H11" stroke="#5e6060"/></svg><svg class="a" style="left:0;top:257px" width="11" height="12"><path d="M0 0H11L5.5 11z" fill="#c0c0c0"/><path d="M0 0.5H11" stroke="#e8ebeb"/><path d="M0 0L5.5 11" stroke="#e8ebeb" stroke-dasharray="1.5 1"/><path d="M11 0L5.5 11" stroke="#5e6060" stroke-dasharray="1.5 1" fill="none"/></svg></div><div class="a bvi" style="left:0;top:297px;width:488px;height:13px;background:#a8a8a8"><div class="a bv" style="left:0;top:0;width:486px;height:11px;background:#c0c0c0"></div></div><div class="a" style="left:0;top:308px;width:505px;height:1px;background:#5e6060"></div><div class="a" style="left:0;top:309px;width:505px;height:1px;background:#e8ebeb"></div></div></div><div class="win " style="left:37px;top:42px;width:608px;height:663px"><div class="in"><div class="tb"><div class="mb"><i></i></div><div class="tt" style="">SameGame</div></div><div class="a" style="left:0;top:23px;right:0;height:14px;background:#287828;color:#60d4e0;font-size:14px;line-height:13px;padding-left:12px;white-space:nowrap;letter-spacing:.1px">Blocks: 837 Score: 2268 High Score: 0</div><div class="a" style="left:0;top:37px;right:0;height:1px;background:#f4f8ff"></div><svg class="a" style="left:0;top:38px" width="598" height="595"><defs><g id="c"><circle cx="10.5" cy="10.5" r="7.7"/><rect x="2" y="10" width="1" height="1"/><rect x="10" y="2" width="1" height="1"/></g></defs><rect width="598" height="595" fill="#005098"/><g fill="#c40048"><use href="#c" x="0" y="0"/><use href="#c" x="400" y="0"/><use href="#c" x="440" y="0"/><use href="#c" x="480" y="0"/><use href="#c" x="500" y="0"/><use href="#c" x="540" y="0"/><use href="#c" x="20" y="20"/><use href="#c" x="80" y="20"/><use href="#c" x="380" y="20"/><use href="#c" x="60" y="40"/><use href="#c" x="320" y="40"/><use href="#c" x="360" y="40"/><use href="#c" x="400" y="40"/><use href="#c" x="0" y="60"/><use href="#c" x="260" y="60"/><use href="#c" x="280" y="60"/><use href="#c" x="380" y="60"/><use href="#c" x="20" y="80"/><use href="#c" x="100" y="80"/><use href="#c" x="260" y="80"/><use href="#c" x="280" y="80"/><use href="#c" x="320" y="80"/><use href="#c" x="20" y="100"/><use href="#c" x="40" y="100"/><use href="#c" x="120" y="100"/><use href="#c" x="320" y="100"/><use href="#c" x="400" y="100"/><use href="#c" x="20" y="120"/><use href="#c" x="60" y="120"/><use href="#c" x="100" y="120"/><use href="#c" x="360" y="120"/><use href="#c" x="380" y="120"/><use href="#c" x="400" y="120"/><use href="#c" x="80" y="140"/><use href="#c" x="260" y="140"/><use href="#c" x="320" y="140"/><use href="#c" x="340" y="140"/><use href="#c" x="380" y="140"/><use href="#c" x="40" y="160"/><use href="#c" x="100" y="160"/><use href="#c" x="140" y="160"/><use href="#c" x="260" y="160"/><use href="#c" x="280" y="160"/><use href="#c" x="320" y="160"/><use href="#c" x="380" y="160"/><use href="#c" x="0" y="180"/><use href="#c" x="140" y="180"/><use href="#c" x="160" y="180"/><use href="#c" x="200" y="180"/><use href="#c" x="300" y="180"/><use href="#c" x="320" y="180"/><use href="#c" x="420" y="180"/><use href="#c" x="0" y="220"/><use href="#c" x="60" y="220"/><use href="#c" x="160" y="220"/><use href="#c" x="200" y="220"/><use href="#c" x="220" y="220"/><use href="#c" x="280" y="220"/><use href="#c" x="300" y="220"/><use href="#c" x="400" y="220"/><use href="#c" x="420" y="220"/><use href="#c" x="40" y="240"/><use href="#c" x="60" y="240"/><use href="#c" x="160" y="240"/><use href="#c" x="180" y="240"/><use href="#c" x="340" y="240"/><use href="#c" x="160" y="260"/><use href="#c" x="200" y="260"/><use href="#c" x="240" y="260"/><use href="#c" x="380" y="260"/><use href="#c" x="120" y="280"/><use href="#c" x="180" y="280"/><use href="#c" x="200" y="280"/><use href="#c" x="300" y="280"/><use href="#c" x="340" y="280"/><use href="#c" x="20" y="300"/><use href="#c" x="240" y="300"/><use href="#c" x="280" y="300"/><use href="#c" x="420" y="300"/><use href="#c" x="200" y="320"/><use href="#c" x="380" y="320"/><use href="#c" x="40" y="340"/><use href="#c" x="100" y="340"/><use href="#c" x="120" y="340"/><use href="#c" x="200" y="340"/><use href="#c" x="60" y="360"/><use href="#c" x="120" y="360"/><use href="#c" x="160" y="360"/><use href="#c" x="360" y="360"/><use href="#c" x="160" y="380"/><use href="#c" x="340" y="380"/><use href="#c" x="40" y="400"/><use href="#c" x="100" y="400"/><use href="#c" x="140" y="400"/><use href="#c" x="160" y="400"/><use href="#c" x="180" y="400"/><use href="#c" x="220" y="400"/><use href="#c" x="280" y="400"/><use href="#c" x="300" y="400"/><use href="#c" x="340" y="400"/><use href="#c" x="420" y="400"/><use href="#c" x="240" y="420"/><use href="#c" x="300" y="420"/><use href="#c" x="320" y="420"/><use href="#c" x="380" y="420"/><use href="#c" x="40" y="440"/><use href="#c" x="80" y="440"/><use href="#c" x="100" y="440"/><use href="#c" x="240" y="440"/><use href="#c" x="380" y="440"/><use href="#c" x="80" y="460"/><use href="#c" x="160" y="460"/><use href="#c" x="220" y="460"/><use href="#c" x="240" y="460"/><use href="#c" x="380" y="460"/><use href="#c" x="20" y="480"/><use href="#c" x="100" y="480"/><use href="#c" x="120" y="480"/><use href="#c" x="180" y="480"/><use href="#c" x="380" y="480"/><use href="#c" x="20" y="500"/><use href="#c" x="100" y="500"/><use href="#c" x="160" y="500"/><use href="#c" x="180" y="500"/><use href="#c" x="340" y="500"/><use href="#c" x="380" y="500"/><use href="#c" x="0" y="520"/><use href="#c" x="120" y="520"/><use href="#c" x="320" y="520"/><use href="#c" x="340" y="520"/><use href="#c" x="380" y="520"/><use href="#c" x="0" y="540"/><use href="#c" x="40" y="540"/><use href="#c" x="120" y="540"/><use href="#c" x="180" y="540"/><use href="#c" x="400" y="540"/><use href="#c" x="40" y="560"/><use href="#c" x="160" y="560"/><use href="#c" x="360" y="560"/><use href="#c" x="400" y="560"/><use href="#c" x="0" y="580"/><use href="#c" x="40" y="580"/><use href="#c" x="80" y="580"/><use href="#c" x="180" y="580"/><use href="#c" x="240" y="580"/><use href="#c" x="360" y="580"/></g><g fill="#00ff00"><use href="#c" x="20" y="0"/><use href="#c" x="420" y="0"/><use href="#c" x="460" y="0"/><use href="#c" x="520" y="0"/><use href="#c" x="560" y="0"/><use href="#c" x="0" y="40"/><use href="#c" x="20" y="40"/><use href="#c" x="340" y="40"/><use href="#c" x="420" y="40"/><use href="#c" x="20" y="60"/><use href="#c" x="320" y="60"/><use href="#c" x="360" y="60"/><use href="#c" x="60" y="80"/><use href="#c" x="80" y="80"/><use href="#c" x="360" y="80"/><use href="#c" x="400" y="80"/><use href="#c" x="0" y="100"/><use href="#c" x="60" y="100"/><use href="#c" x="80" y="100"/><use href="#c" x="260" y="100"/><use href="#c" x="360" y="100"/><use href="#c" x="420" y="100"/><use href="#c" x="360" y="140"/><use href="#c" x="400" y="140"/><use href="#c" x="420" y="140"/><use href="#c" x="80" y="160"/><use href="#c" x="340" y="160"/><use href="#c" x="80" y="180"/><use href="#c" x="100" y="180"/><use href="#c" x="220" y="180"/><use href="#c" x="260" y="180"/><use href="#c" x="60" y="200"/><use href="#c" x="80" y="200"/><use href="#c" x="160" y="200"/><use href="#c" x="300" y="200"/><use href="#c" x="320" y="200"/><use href="#c" x="400" y="200"/><use href="#c" x="180" y="220"/><use href="#c" x="320" y="220"/><use href="#c" x="100" y="240"/><use href="#c" x="120" y="240"/><use href="#c" x="240" y="240"/><use href="#c" x="260" y="240"/><use href="#c" x="380" y="240"/><use href="#c" x="420" y="240"/><use href="#c" x="40" y="260"/><use href="#c" x="120" y="260"/><use href="#c" x="260" y="260"/><use href="#c" x="280" y="260"/><use href="#c" x="320" y="260"/><use href="#c" x="420" y="260"/><use href="#c" x="40" y="280"/><use href="#c" x="80" y="280"/><use href="#c" x="100" y="280"/><use href="#c" x="220" y="280"/><use href="#c" x="240" y="280"/><use href="#c" x="360" y="280"/><use href="#c" x="380" y="280"/><use href="#c" x="40" y="300"/><use href="#c" x="80" y="300"/><use href="#c" x="140" y="300"/><use href="#c" x="180" y="300"/><use href="#c" x="260" y="300"/><use href="#c" x="400" y="300"/><use href="#c" x="0" y="320"/><use href="#c" x="20" y="320"/><use href="#c" x="80" y="320"/><use href="#c" x="140" y="320"/><use href="#c" x="260" y="320"/><use href="#c" x="340" y="320"/><use href="#c" x="400" y="320"/><use href="#c" x="80" y="340"/><use href="#c" x="260" y="340"/><use href="#c" x="320" y="340"/><use href="#c" x="340" y="340"/><use href="#c" x="380" y="340"/><use href="#c" x="400" y="340"/><use href="#c" x="0" y="360"/><use href="#c" x="400" y="360"/><use href="#c" x="100" y="380"/><use href="#c" x="180" y="380"/><use href="#c" x="200" y="380"/><use href="#c" x="280" y="380"/><use href="#c" x="320" y="380"/><use href="#c" x="400" y="380"/><use href="#c" x="240" y="400"/><use href="#c" x="260" y="400"/><use href="#c" x="360" y="400"/><use href="#c" x="0" y="420"/><use href="#c" x="180" y="420"/><use href="#c" x="220" y="420"/><use href="#c" x="280" y="420"/><use href="#c" x="340" y="420"/><use href="#c" x="420" y="420"/><use href="#c" x="120" y="440"/><use href="#c" x="220" y="440"/><use href="#c" x="300" y="440"/><use href="#c" x="320" y="440"/><use href="#c" x="0" y="460"/><use href="#c" x="20" y="460"/><use href="#c" x="40" y="460"/><use href="#c" x="180" y="460"/><use href="#c" x="260" y="460"/><use href="#c" x="280" y="460"/><use href="#c" x="300" y="460"/><use href="#c" x="320" y="460"/><use href="#c" x="360" y="460"/><use href="#c" x="80" y="480"/><use href="#c" x="220" y="480"/><use href="#c" x="280" y="480"/><use href="#c" x="300" y="480"/><use href="#c" x="340" y="480"/><use href="#c" x="400" y="480"/><use href="#c" x="420" y="480"/><use href="#c" x="140" y="500"/><use href="#c" x="200" y="500"/><use href="#c" x="320" y="500"/><use href="#c" x="400" y="500"/><use href="#c" x="420" y="500"/><use href="#c" x="20" y="520"/><use href="#c" x="60" y="520"/><use href="#c" x="360" y="520"/><use href="#c" x="60" y="540"/><use href="#c" x="100" y="540"/><use href="#c" x="140" y="540"/><use href="#c" x="200" y="540"/><use href="#c" x="220" y="540"/><use href="#c" x="280" y="540"/><use href="#c" x="300" y="540"/><use href="#c" x="320" y="540"/><use href="#c" x="60" y="560"/><use href="#c" x="100" y="560"/><use href="#c" x="320" y="560"/><use href="#c" x="420" y="560"/><use href="#c" x="20" y="580"/><use href="#c" x="100" y="580"/><use href="#c" x="160" y="580"/><use href="#c" x="200" y="580"/><use href="#c" x="320" y="580"/><use href="#c" x="340" y="580"/><use href="#c" x="400" y="580"/></g><g fill="#ff00ff"><use href="#c" x="40" y="0"/><use href="#c" x="60" y="0"/><use href="#c" x="100" y="0"/><use href="#c" x="360" y="0"/><use href="#c" x="580" y="0"/><use href="#c" x="0" y="20"/><use href="#c" x="60" y="20"/><use href="#c" x="360" y="20"/><use href="#c" x="400" y="20"/><use href="#c" x="420" y="20"/><use href="#c" x="80" y="40"/><use href="#c" x="380" y="40"/><use href="#c" x="40" y="60"/><use href="#c" x="60" y="60"/><use href="#c" x="100" y="60"/><use href="#c" x="300" y="60"/><use href="#c" x="420" y="60"/><use href="#c" x="40" y="80"/><use href="#c" x="380" y="80"/><use href="#c" x="100" y="100"/><use href="#c" x="200" y="100"/><use href="#c" x="220" y="100"/><use href="#c" x="280" y="100"/><use href="#c" x="340" y="100"/><use href="#c" x="380" y="100"/><use href="#c" x="40" y="120"/><use href="#c" x="200" y="120"/><use href="#c" x="220" y="120"/><use href="#c" x="260" y="120"/><use href="#c" x="320" y="120"/><use href="#c" x="420" y="120"/><use href="#c" x="20" y="140"/><use href="#c" x="40" y="140"/><use href="#c" x="60" y="140"/><use href="#c" x="120" y="140"/><use href="#c" x="200" y="140"/><use href="#c" x="220" y="140"/><use href="#c" x="20" y="160"/><use href="#c" x="60" y="160"/><use href="#c" x="360" y="160"/><use href="#c" x="40" y="180"/><use href="#c" x="60" y="180"/><use href="#c" x="380" y="180"/><use href="#c" x="20" y="200"/><use href="#c" x="40" y="200"/><use href="#c" x="140" y="200"/><use href="#c" x="220" y="200"/><use href="#c" x="260" y="200"/><use href="#c" x="280" y="200"/><use href="#c" x="420" y="200"/><use href="#c" x="40" y="220"/><use href="#c" x="80" y="220"/><use href="#c" x="240" y="220"/><use href="#c" x="340" y="220"/><use href="#c" x="360" y="220"/><use href="#c" x="380" y="220"/><use href="#c" x="0" y="240"/><use href="#c" x="20" y="240"/><use href="#c" x="140" y="240"/><use href="#c" x="200" y="240"/><use href="#c" x="220" y="240"/><use href="#c" x="280" y="240"/><use href="#c" x="360" y="240"/><use href="#c" x="0" y="260"/><use href="#c" x="60" y="260"/><use href="#c" x="80" y="260"/><use href="#c" x="100" y="260"/><use href="#c" x="140" y="260"/><use href="#c" x="220" y="260"/><use href="#c" x="300" y="260"/><use href="#c" x="360" y="260"/><use href="#c" x="0" y="280"/><use href="#c" x="320" y="280"/><use href="#c" x="420" y="280"/><use href="#c" x="0" y="300"/><use href="#c" x="60" y="300"/><use href="#c" x="120" y="300"/><use href="#c" x="160" y="300"/><use href="#c" x="220" y="300"/><use href="#c" x="300" y="300"/><use href="#c" x="320" y="300"/><use href="#c" x="340" y="300"/><use href="#c" x="360" y="300"/><use href="#c" x="40" y="320"/><use href="#c" x="60" y="320"/><use href="#c" x="100" y="320"/><use href="#c" x="160" y="320"/><use href="#c" x="180" y="320"/><use href="#c" x="220" y="320"/><use href="#c" x="300" y="320"/><use href="#c" x="320" y="320"/><use href="#c" x="420" y="320"/><use href="#c" x="20" y="340"/><use href="#c" x="180" y="340"/><use href="#c" x="280" y="340"/><use href="#c" x="40" y="360"/><use href="#c" x="80" y="360"/><use href="#c" x="240" y="360"/><use href="#c" x="260" y="360"/><use href="#c" x="280" y="360"/><use href="#c" x="340" y="360"/><use href="#c" x="420" y="360"/><use href="#c" x="20" y="380"/><use href="#c" x="40" y="380"/><use href="#c" x="60" y="380"/><use href="#c" x="80" y="380"/><use href="#c" x="120" y="380"/><use href="#c" x="140" y="380"/><use href="#c" x="220" y="380"/><use href="#c" x="260" y="380"/><use href="#c" x="300" y="380"/><use href="#c" x="360" y="380"/><use href="#c" x="380" y="380"/><use href="#c" x="0" y="400"/><use href="#c" x="20" y="400"/><use href="#c" x="80" y="400"/><use href="#c" x="200" y="400"/><use href="#c" x="380" y="400"/><use href="#c" x="20" y="420"/><use href="#c" x="40" y="420"/><use href="#c" x="60" y="420"/><use href="#c" x="100" y="420"/><use href="#c" x="140" y="420"/><use href="#c" x="160" y="420"/><use href="#c" x="260" y="420"/><use href="#c" x="400" y="420"/><use href="#c" x="0" y="440"/><use href="#c" x="20" y="440"/><use href="#c" x="60" y="440"/><use href="#c" x="140" y="440"/><use href="#c" x="160" y="440"/><use href="#c" x="180" y="440"/><use href="#c" x="200" y="440"/><use href="#c" x="260" y="440"/><use href="#c" x="280" y="440"/><use href="#c" x="340" y="440"/><use href="#c" x="360" y="440"/><use href="#c" x="400" y="440"/><use href="#c" x="420" y="440"/><use href="#c" x="60" y="460"/><use href="#c" x="100" y="460"/><use href="#c" x="120" y="460"/><use href="#c" x="140" y="460"/><use href="#c" x="200" y="460"/><use href="#c" x="400" y="460"/><use href="#c" x="420" y="460"/><use href="#c" x="0" y="480"/><use href="#c" x="60" y="480"/><use href="#c" x="140" y="480"/><use href="#c" x="160" y="480"/><use href="#c" x="200" y="480"/><use href="#c" x="260" y="480"/><use href="#c" x="320" y="480"/><use href="#c" x="360" y="480"/><use href="#c" x="0" y="500"/><use href="#c" x="40" y="500"/><use href="#c" x="220" y="500"/><use href="#c" x="240" y="500"/><use href="#c" x="40" y="520"/><use href="#c" x="160" y="520"/><use href="#c" x="300" y="520"/><use href="#c" x="20" y="540"/><use href="#c" x="80" y="540"/><use href="#c" x="240" y="540"/><use href="#c" x="260" y="540"/><use href="#c" x="340" y="540"/><use href="#c" x="360" y="540"/><use href="#c" x="420" y="540"/><use href="#c" x="20" y="560"/><use href="#c" x="80" y="560"/><use href="#c" x="140" y="560"/><use href="#c" x="180" y="560"/><use href="#c" x="240" y="560"/><use href="#c" x="280" y="560"/><use href="#c" x="340" y="560"/><use href="#c" x="380" y="560"/><use href="#c" x="60" y="580"/><use href="#c" x="120" y="580"/><use href="#c" x="260" y="580"/><use href="#c" x="380" y="580"/></g><g fill="#78c478"><use href="#c" x="80" y="0"/><use href="#c" x="340" y="0"/><use href="#c" x="380" y="0"/><use href="#c" x="40" y="20"/><use href="#c" x="100" y="20"/><use href="#c" x="320" y="20"/><use href="#c" x="340" y="20"/><use href="#c" x="40" y="40"/><use href="#c" x="100" y="40"/><use href="#c" x="80" y="60"/><use href="#c" x="340" y="60"/><use href="#c" x="400" y="60"/><use href="#c" x="0" y="80"/><use href="#c" x="220" y="80"/><use href="#c" x="300" y="80"/><use href="#c" x="340" y="80"/><use href="#c" x="420" y="80"/><use href="#c" x="300" y="100"/><use href="#c" x="80" y="120"/><use href="#c" x="120" y="120"/><use href="#c" x="280" y="120"/><use href="#c" x="300" y="120"/><use href="#c" x="340" y="120"/><use href="#c" x="100" y="140"/><use href="#c" x="280" y="140"/><use href="#c" x="300" y="140"/><use href="#c" x="120" y="160"/><use href="#c" x="200" y="160"/><use href="#c" x="220" y="160"/><use href="#c" x="300" y="160"/><use href="#c" x="400" y="160"/><use href="#c" x="420" y="160"/><use href="#c" x="20" y="180"/><use href="#c" x="120" y="180"/><use href="#c" x="280" y="180"/><use href="#c" x="340" y="180"/><use href="#c" x="360" y="180"/><use href="#c" x="400" y="180"/><use href="#c" x="0" y="200"/><use href="#c" x="100" y="200"/><use href="#c" x="120" y="200"/><use href="#c" x="200" y="200"/><use href="#c" x="340" y="200"/><use href="#c" x="360" y="200"/><use href="#c" x="380" y="200"/><use href="#c" x="20" y="220"/><use href="#c" x="100" y="220"/><use href="#c" x="120" y="220"/><use href="#c" x="140" y="220"/><use href="#c" x="260" y="220"/><use href="#c" x="80" y="240"/><use href="#c" x="300" y="240"/><use href="#c" x="320" y="240"/><use href="#c" x="400" y="240"/><use href="#c" x="20" y="260"/><use href="#c" x="180" y="260"/><use href="#c" x="340" y="260"/><use href="#c" x="400" y="260"/><use href="#c" x="20" y="280"/><use href="#c" x="60" y="280"/><use href="#c" x="140" y="280"/><use href="#c" x="160" y="280"/><use href="#c" x="260" y="280"/><use href="#c" x="280" y="280"/><use href="#c" x="400" y="280"/><use href="#c" x="100" y="300"/><use href="#c" x="200" y="300"/><use href="#c" x="380" y="300"/><use href="#c" x="120" y="320"/><use href="#c" x="240" y="320"/><use href="#c" x="280" y="320"/><use href="#c" x="360" y="320"/><use href="#c" x="0" y="340"/><use href="#c" x="60" y="340"/><use href="#c" x="140" y="340"/><use href="#c" x="160" y="340"/><use href="#c" x="220" y="340"/><use href="#c" x="240" y="340"/><use href="#c" x="300" y="340"/><use href="#c" x="360" y="340"/><use href="#c" x="420" y="340"/><use href="#c" x="20" y="360"/><use href="#c" x="100" y="360"/><use href="#c" x="140" y="360"/><use href="#c" x="180" y="360"/><use href="#c" x="200" y="360"/><use href="#c" x="220" y="360"/><use href="#c" x="300" y="360"/><use href="#c" x="320" y="360"/><use href="#c" x="380" y="360"/><use href="#c" x="0" y="380"/><use href="#c" x="240" y="380"/><use href="#c" x="420" y="380"/><use href="#c" x="60" y="400"/><use href="#c" x="120" y="400"/><use href="#c" x="320" y="400"/><use href="#c" x="400" y="400"/><use href="#c" x="80" y="420"/><use href="#c" x="120" y="420"/><use href="#c" x="200" y="420"/><use href="#c" x="360" y="420"/><use href="#c" x="340" y="460"/><use href="#c" x="40" y="480"/><use href="#c" x="240" y="480"/><use href="#c" x="60" y="500"/><use href="#c" x="80" y="500"/><use href="#c" x="120" y="500"/><use href="#c" x="260" y="500"/><use href="#c" x="280" y="500"/><use href="#c" x="300" y="500"/><use href="#c" x="360" y="500"/><use href="#c" x="80" y="520"/><use href="#c" x="100" y="520"/><use href="#c" x="140" y="520"/><use href="#c" x="180" y="520"/><use href="#c" x="200" y="520"/><use href="#c" x="220" y="520"/><use href="#c" x="240" y="520"/><use href="#c" x="260" y="520"/><use href="#c" x="280" y="520"/><use href="#c" x="400" y="520"/><use href="#c" x="420" y="520"/><use href="#c" x="160" y="540"/><use href="#c" x="380" y="540"/><use href="#c" x="0" y="560"/><use href="#c" x="120" y="560"/><use href="#c" x="200" y="560"/><use href="#c" x="220" y="560"/><use href="#c" x="260" y="560"/><use href="#c" x="300" y="560"/><use href="#c" x="140" y="580"/><use href="#c" x="220" y="580"/><use href="#c" x="280" y="580"/><use href="#c" x="300" y="580"/><use href="#c" x="420" y="580"/></g><g fill="#446844"><use href="#c" x="0" y="120"/><use href="#c" x="0" y="140"/><use href="#c" x="0" y="160"/></g></svg><div class="sb"><b></b><span>Unsigned Java Applet Window</span></div></div></div><div class="win " style="left:474px;top:89px;width:568px;height:668px"><div class="in"><div class="tb"><div class="mb"><i></i></div><div class="tt" style="letter-spacing:1.25px">Nibbles!</div></div><div class="a" style="left:0;top:23px;right:0;height:20px;background:#008000;color:#fff;font-size:14px;line-height:22px;padding-left:1px;white-space:pre;letter-spacing:.15px">Game paused.  Press 'p' to continue.</div><div class="a" style="left:0;top:43px;right:0;bottom:20px;background:#000080"></div><div class="a" style="left:408px;top:148px;width:8px;height:15px;background:#00f080"></div><div class="a" style="left:160px;top:223px;width:320px;height:15px;background:#ffffff"></div><div class="a" style="left:520px;top:328px;width:8px;height:90px;background:#ff0000"></div><div class="a" style="left:400px;top:403px;width:128px;height:15px;background:#ff0000"></div><div class="a" style="left:264px;top:418px;width:136px;height:15px;background:#ffff00"></div><div class="a" style="left:264px;top:418px;width:8px;height:135px;background:#ffff00"></div><div class="a" style="left:216px;top:538px;width:56px;height:15px;background:#ffff00"></div><div class="sb" style="border-top:1px solid #5e6060"><b></b><span>Unsigned Java Applet Window</span><div class="a" style="left:0;top:0;right:0;height:1px;background:#e8ebeb"></div></div></div></div><div class="win act f6" style="left:1050px;top:305px;width:250px;height:480px"><div class="in"><div class="a" style="left:0;top:0;width:300px;height:23px;background:#000080;border-top:1px solid #8585c8;border-left:1px solid #8585c8"><div class="a" style="left:22px;top:0;width:1px;height:22px;background:#8585c8"></div><div class="a" style="left:3px;top:8px;width:15px;height:4px;border:1px solid #8585c8"></div></div><div class="a" style="left:22px;top:-4px;width:2px;height:4px;background:#6868b4"></div><div class="a" style="left:-4px;top:22px;width:4px;height:2px;background:#6868b4"></div><div class="a" style="left:-1px;top:-1px;width:301px;height:1px;background:#5858ac"></div><div class="a" style="left:-1px;top:-1px;width:1px;height:24px;background:#5858ac"></div><div class="a" style="left:21px;top:0;width:1px;height:23px;background:#5858ac"></div><div class="a" style="left:0;top:23px;width:300px;height:35px;background:#c0c0c0;border-top:2px solid #f2f2ea;border-left:2px solid #f2f2ea;border-bottom:1px solid #5e6060;font-size:19px;line-height:31px;white-space:pre;text-decoration-thickness:1px;text-underline-offset:3px"><span class="a" style="left:10px;letter-spacing:.92px"><u>W</u>indow</span><span class="a" style="left:97.5px;letter-spacing:.55px"><u>E</u>dit</span><span class="a" style="left:146.2px;letter-spacing:.75px"><u>O</u>ptions</span></div><div class="a" style="left:0;top:58px;width:300px;height:410px;background:#c0c0c0;border-left:1px solid #f2f2ea;border-bottom:1px solid #5e6060"><div class="a" style="left:0;bottom:2px;width:300px;height:1px;background:#d4d4cc"></div></div><div class="a" style="left:4px;top:62px;width:300px;height:402px;background:#000;border:2px solid #000080;outline:0"><div class="a" style="left:0;top:0;width:300px;height:398px;border:1px solid #707060"></div></div><div class="term" style="left:9px;top:68px">drwxr-xr-x   3 djwong
-rw-------   1 djwong
drwxr-xr-x   2 djwong
-rw-------   1 djwong
drwxr-xr-x   3 djwong
-rw-r--r--   1 djwong
drwxr-xr-x   2 djwong
-rw-------   1 djwong
drwxr-xr-x   2 djwong
-rw-r--r--   1 djwong
-rw-r--r--   1 djwong
-rw-r--r--   1 djwong
-rw-r--r--   1 djwong
drwxr-xr-x   2 djwong
-rw-r--r--   1 djwong
drwx------   2 djwong
-rw-r--r--   1 djwong
drwxr-x--x   3 djwong
drwxr-xr-x   6 djwong
[uape-10 ~]$ scp foo.blah.gz dj
djwong@w.dhs.org’s password:
foo.blah.gz          100% |****
[uape-10 ~]$
[uape-10 ~]$
[uape-10 ~]$ xwd -out jyz.xwd</div><div class="a" style="left:9px;top:443px;width:9px;height:14px;background:#fff"></div></div></div></body></html>
